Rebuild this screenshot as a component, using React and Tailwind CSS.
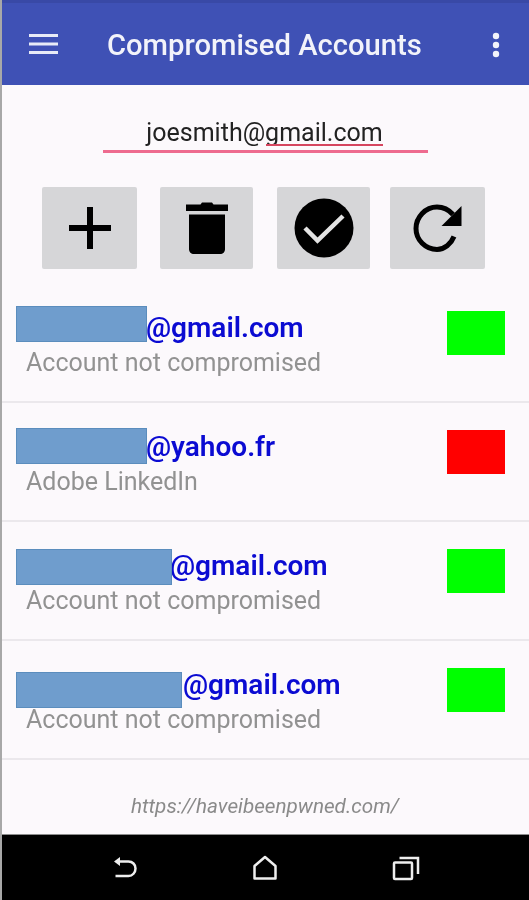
import React from 'react';

const accounts = [
  { domain: '@gmail.com', note: 'Account not compromised', ok: true, indent: 'pl-[130px]', redact: 'top-[22px] w-[131px]' },
  { domain: '@yahoo.fr', note: 'Adobe LinkedIn', ok: false, indent: 'pl-[130px]', redact: 'top-[25px] w-[131px]' },
  { domain: '@gmail.com', note: 'Account not compromised', ok: true, indent: 'pl-[154px]', redact: 'top-[27px] w-[156px]' },
  { domain: '@gmail.com', note: 'Account not compromised', ok: true, indent: 'pl-[167px]', redact: 'top-[31px] w-[166px]' },
];

const PlusIcon = () => (
  <svg width="44" height="44" viewBox="0 0 44 44" fill="#000">
    <rect x="1" y="19" width="42" height="6" />
    <rect x="19" y="1" width="6" height="42" />
  </svg>
);

const TrashIcon = () => (
  <svg width="44" height="54" viewBox="0 0 44 54" fill="#000">
    <path d="M1 3.5h14.5l1.5-2h10l1.5 2H43V10H1z" />
    <path d="M4 13.5h36V48c0 3-2 5-5 5H9c-3 0-5-2-5-5z" />
  </svg>
);

const CheckIcon = () => (
  <svg width="60" height="60" viewBox="0 0 60 60">
    <circle cx="30" cy="30" r="29.5" fill="#000" />
    <path d="M11 30l12.5 12.5L49 18" fill="none" stroke="#e4e4e4" strokeWidth="4.5" />
  </svg>
);

const RefreshIcon = () => (
  <svg width="50" height="50" viewBox="0 0 50 50" fill="none">
    <path d="M41 33.5C38 41 31.5 46.5 24 46.5 12.5 46.5 3 37 3 25.5S12.5 4 24 4c6.5 0 12 3 16 7.5" stroke="#000" strokeWidth="5" />
    <path d="M48.5 3v20H28.5z" fill="#000" />
  </svg>
);

const BackIcon = () => (
  <svg width="26" height="26" viewBox="0 0 26 26" fill="none" stroke="#eeeeee" strokeWidth="2.5">
    <path d="M4 6.5h12.5c4 0 7 3 7 7s-3 7.5-7 7.5H3.5" />
    <path d="M2 6.5l6-4.5v9z" fill="#eeeeee" stroke="none" />
  </svg>
);

const HomeIcon = () => (
  <svg width="26" height="26" viewBox="0 0 26 26" fill="none" stroke="#eeeeee" strokeWidth="2.5" strokeLinejoin="round">
    <path d="M2.5 11L13 2l10.5 9v12.5h-21z" />
  </svg>
);

const RecentsIcon = () => (
  <svg width="28" height="26" viewBox="0 0 28 26" fill="none" stroke="#eeeeee" strokeWidth="2.5">
    <rect x="2" y="7.5" width="18" height="16.5" rx="1" />
    <path d="M7.5 3h18.5v16" />
  </svg>
);

const Row = ({ account }) => (
  <div className="relative flex h-[119px] justify-between border-b-2 border-[#ebe8ec] pl-[14px] pr-[24px] pt-[28px]">
    <div>
      <div className={`text-[28px] leading-[32px] font-semibold text-[#0b0bd2] ${account.indent}`}>{account.domain}</div>
      <p className="pl-[10px] text-[25px] leading-[37px] text-[#929292]">{account.note}</p>
    </div>
    <div className={`-mt-[1px] h-[44px] w-[58px] shrink-0 ${account.ok ? 'bg-[#00ff00]' : 'bg-[#ff0000]'}`}></div>
    <div className={`absolute left-[14px] h-[36px] ${account.redact} border border-[#5b8dbd] bg-[#6f9dcd]`}></div>
  </div>
);

export default function App() {
  return (
    <div className="flex h-[900px] w-[529px] overflow-hidden bg-[#a8a8a8] font-['Roboto',sans-serif] blur-[0.4px]">
      <div className="w-[2px] shrink-0"></div>
      <div className="flex flex-1 flex-col bg-[#fcf9fc]">
        <header className="flex h-[85px] shrink-0 items-center border-t-[3px] border-[#3949a6] bg-[#3f51b5] pl-[27px] pr-[29px]">
          <svg width="30" height="24" viewBox="0 0 30 24" fill="#e8ebf7">
            <rect x="0" y="2" width="29" height="3" />
            <rect x="0" y="10.5" width="29" height="3" />
            <rect x="0" y="19" width="29" height="3" />
          </svg>
          <h1 className="ml-[48px] mr-auto mt-[4px] text-[29.2px] leading-none font-medium text-[#f2f3fa]">Compromised Accounts</h1>
          <svg className="mt-[2px]" width="8" height="26" viewBox="0 0 8 26" fill="#f2f3fa">
            <circle cx="4" cy="4" r="3.2" />
            <circle cx="4" cy="13" r="3.2" />
            <circle cx="4" cy="22" r="3.2" />
          </svg>
        </header>

        <div className="flex justify-center pt-[31px]">
          <div className="relative h-[37px] w-[325px] border-b-[3px] border-[#ee6b8f] text-center text-[25px] leading-[34px] text-[#222222]">
            <span className="mr-[2px]">joesmith@gmail.com</span>
            <div className="absolute left-[163px] top-[28px] h-[2px] w-[117px] bg-[#d6455f]"></div>
          </div>
        </div>

        <div className="flex pl-[40px] pt-[34px]">
          <div className="flex h-[82px] w-[95px] items-center justify-center rounded-[2px] bg-[#d6d6d8]"><PlusIcon /></div>
          <div className="ml-[23px] flex h-[82px] w-[93px] items-center justify-center rounded-[2px] bg-[#d6d6d8]"><TrashIcon /></div>
          <div className="ml-[24px] flex h-[82px] w-[93px] items-center justify-center rounded-[2px] bg-[#d6d6d8]"><CheckIcon /></div>
          <div className="ml-[20px] flex h-[82px] w-[95px] items-center justify-center rounded-[2px] bg-[#d6d6d8]"><RefreshIcon /></div>
        </div>

        <div className="mt-[15px]">
          {accounts.map((account, i) => (
            <Row key={i} account={account} />
          ))}
        </div>

        <div className="flex flex-1 items-end justify-center pb-[14px]">
          <span className="mr-[1px] text-[20.7px] leading-[28px] text-[#8a8a8a] italic">https://haveibeenpwned.com/</span>
        </div>

        <nav className="flex h-[66px] shrink-0 items-center justify-between border-t border-[#8d8d8d] bg-black pl-[110px] pr-[109px]">
          <BackIcon />
          <HomeIcon />
          <RecentsIcon />
        </nav>
      </div>
    </div>
  );
}
